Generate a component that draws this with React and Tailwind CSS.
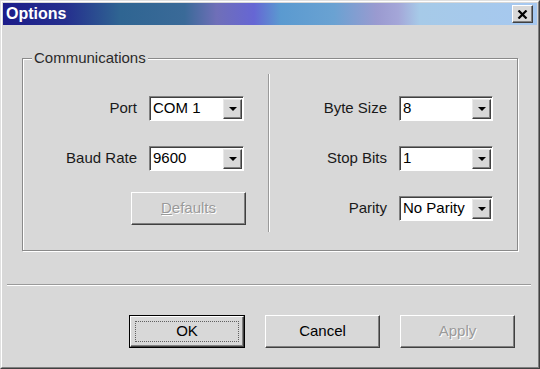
import React from 'react';

const font = { fontFamily: '"Liberation Sans", Arial, sans-serif' };

function Arrow() {
	return (
		<svg width="8" height="4" viewBox="0 0 8 4">
			<path d="M0 0h8L4 4z" fill="#000" />
		</svg>
	);
}

function Combo({ value, width = 'w-[95px]' }) {
	return (
		<div
			className={`${width} h-[25px] flex border border-t-[#808080] border-l-[#808080] border-r-white border-b-white shadow-[inset_1px_1px_0_#404040] bg-white`}
		>
			<div className="flex-1 flex items-center pl-[3px] pt-[1px] text-[15px] text-black overflow-hidden whitespace-nowrap">
				{value}
			</div>
			<div className="w-[19px] mt-[2px] mb-[1px] mr-[1px] flex items-center justify-center bg-[#d8d8d8] border border-t-[#e8e8e8] border-l-[#e8e8e8] border-r-[#404040] border-b-[#404040] shadow-[inset_-1px_-1px_0_#808080]">
				<Arrow />
			</div>
		</div>
	);
}

function Row({ label, value, width }) {
	return (
		<div className="flex items-center gap-[12px] h-[25px]">
			<span className="text-[15px] text-[#1a1a1a]">{label}</span>
			<Combo value={value} width={width} />
		</div>
	);
}

function Button({ children, disabled, isDefault }) {
	const inner = (
		<div className="w-full h-full flex items-center justify-center bg-[#d8d8d8] border border-t-white border-l-white border-r-[#404040] border-b-[#404040] shadow-[inset_-1px_-1px_0_#808080] text-[15px]">
			{isDefault ? (
				<div className="w-[calc(100%-8px)] h-[calc(100%-8px)] border border-dotted border-[#606060] flex items-center justify-center">
					{children}
				</div>
			) : (
				<span className={disabled ? 'text-[#9a9a9a] [text-shadow:1px_1px_0_#ffffff]' : 'text-black'}>{children}</span>
			)}
		</div>
	);
	return isDefault ? (
		<div className="w-[116px] h-[33px] border border-black">{inner}</div>
	) : (
		<div className="w-[115px] h-[33px]">{inner}</div>
	);
}

export default function App() {
	return (
		<div
			style={font}
			className="w-[540px] h-[369px] bg-[#d8d8d8] border border-t-[#e0e0e0] border-l-[#e0e0e0] border-r-[#404040] border-b-[#404040] select-none"
		>
			<div className="w-full h-full flex flex-col border border-t-white border-l-white border-r-[#808080] border-b-[#808080] p-[1px]">
				{/* title bar */}
				<div className="h-[22px] flex items-center justify-between pl-[3px] pr-[2px] bg-[linear-gradient(to_right,#1c1c8a_0%,#25308e_12%,#2f6592_22%,#3a6a98_34%,#6f6fb8_40%,#6666d4_47%,#5a9ad0_52%,#6aa2d2_62%,#9a9ad0_70%,#a4a6d8_74%,#a6cae8_78%,#a6c8f0_100%)]">
					<span className="text-white font-bold text-[16px] leading-none">Options</span>
					<div className="w-[21px] h-[18px] flex items-center justify-center bg-[#d8d8d8] border border-t-white border-l-white border-r-[#404040] border-b-[#404040] shadow-[inset_-1px_-1px_0_#808080] mr-[2px]">
						<svg width="11" height="9" viewBox="0 0 11 9">
							<path d="M1.5 0.5l8 8M9.5 0.5l-8 8" stroke="#000" strokeWidth="2.2" />
						</svg>
					</div>
				</div>

				{/* body */}
				<div className="flex-1 flex flex-col">
					<fieldset className="mt-[22px] ml-[19px] mr-[19px] border border-[#8a8a8a] shadow-[inset_1px_1px_0_#ffffff,1px_1px_0_#ffffff] pb-[18px]">
						<legend className="ml-[9px] px-[2px] text-[15px] text-[#2a2a2a] bg-[#d8d8d8]">Communications</legend>
						<div className="flex pt-[4px]">
							<div className="w-[245px] flex flex-col items-end pr-[24px] pt-[22px] gap-[25px]">
								<Row label="Port" value="COM 1" />
								<Row label="Baud Rate" value="9600" />
								<div className="-mt-[4px] -mr-[2px]">
									<Button disabled>
										<span className="underline">D</span>efaults
									</Button>
								</div>
							</div>
							<div className="w-[2px] h-[158px] border-l border-l-[#9a9a9a] border-r border-r-white" />
							<div className="flex-1 flex flex-col items-end pr-[24px] pt-[22px] gap-[25px]">
								<Row label="Byte Size" value="8" width="w-[94px]" />
								<Row label="Stop Bits" value="1" width="w-[94px]" />
								<Row label="Parity" value="No Parity" width="w-[94px]" />
							</div>
						</div>
					</fieldset>

					<div className="mt-[33px] ml-[4px] mr-[6px] h-[2px] border-t border-t-[#9a9a9a] border-b border-b-white" />

					<div className="flex justify-end gap-[20px] pr-[22px] mt-[29px]">
						<Button isDefault>OK</Button>
						<Button>Cancel</Button>
						<Button disabled>Apply</Button>
					</div>
				</div>
			</div>
		</div>
	);
}
